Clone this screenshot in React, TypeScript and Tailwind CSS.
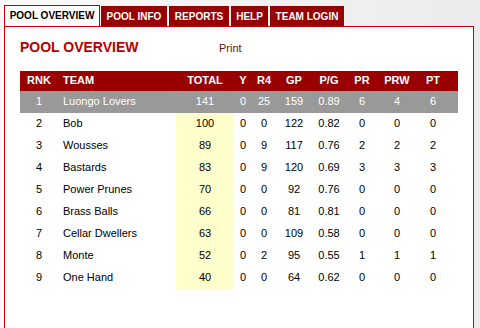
import React from "react";

const rows = [
  ["1", "Luongo Lovers", "141", "0", "25", "159", "0.89", "6", "4", "6"],
  ["2", "Bob", "100", "0", "0", "122", "0.82", "0", "0", "0"],
  ["3", "Wousses", "89", "0", "9", "117", "0.76", "2", "2", "2"],
  ["4", "Bastards", "83", "0", "9", "120", "0.69", "3", "3", "3"],
  ["5", "Power Prunes", "70", "0", "0", "92", "0.76", "0", "0", "0"],
  ["6", "Brass Balls", "66", "0", "0", "81", "0.81", "0", "0", "0"],
  ["7", "Cellar Dwellers", "63", "0", "0", "109", "0.58", "0", "0", "0"],
  ["8", "Monte", "52", "0", "2", "95", "0.55", "1", "1", "1"],
  ["9", "One Hand", "40", "0", "0", "64", "0.62", "0", "0", "0"],
];

const headers = ["RNK", "TEAM", "TOTAL", "Y", "R4", "GP", "P/G", "PR", "PRW", "PT"];
const widths = ["w-[38px]", "w-[118px]", "w-[58px]", "w-[18px]", "w-[24px]", "w-[36px]", "w-[34px]", "w-[32px]", "w-[38px]", "w-[34px]"];

function Cell({ i, children, extra = "" }: { i: number; children: React.ReactNode; extra?: string }) {
  const align = i === 1 ? "text-left pl-[5px]" : "text-center";
  return <div className={`${widths[i]} ${align} shrink-0 ${extra}`}>{children}</div>;
}

export default function App() {
  return (
    <div
      className="w-[480px] h-[328px] overflow-hidden pt-[6px] pl-[4px] bg-gradient-to-r from-[#fbfbfb] to-[#ebebeb]"
      style={{ fontFamily: '"Liberation Sans", Arial, sans-serif' }}
    >
      <div className="flex items-end relative z-10 h-[20px]">
        <div className="w-[96px] h-[21px] bg-white border border-b-0 border-[#c00000] text-black text-[10px] font-bold leading-[19px] text-center">
          POOL OVERVIEW
        </div>
        <div className="ml-[1px] w-[66px] h-[20px] bg-[#990000] text-white text-[10px] font-bold leading-[21px] text-center">POOL INFO</div>
        <div className="ml-[2px] w-[60px] h-[20px] bg-[#990000] text-white text-[10px] font-bold leading-[21px] text-center">REPORTS</div>
        <div className="ml-[2px] w-[37px] h-[20px] bg-[#990000] text-white text-[10px] font-bold leading-[21px] text-center">HELP</div>
        <div className="ml-[2px] w-[74px] h-[20px] bg-[#990000] text-white text-[10px] font-bold leading-[21px] text-center">TEAM LOGIN</div>
      </div>
      <div className="w-[470px] h-[320px] bg-white border border-[#c00000] pl-[15px]">
        <div className="flex items-baseline mt-[12px]">
          <div className="w-[199px] text-[14px] leading-[16px] font-bold text-[#b80000]">POOL OVERVIEW</div>
          <div className="text-[11px] text-[#6b1010]">Print</div>
        </div>
        <div className="mt-[14px] w-[438px] text-[11px]">
          <div className="flex h-[20px] items-center bg-[#990000] text-white font-bold">
            {headers.map((h, i) => (
              <Cell key={h} i={i}>{h}</Cell>
            ))}
          </div>
          {rows.map((r, ri) => (
            <div
              key={ri}
              className={`flex h-[22px] items-stretch ${ri === 0 ? "bg-[#999999] text-white" : "text-black"}`}
            >
              {r.map((v, i) => (
                <Cell
                  key={i}
                  i={i}
                  extra={`flex items-center ${i === 1 ? "justify-start" : "justify-center"} ${i === 2 && ri > 0 ? "bg-[#ffffcc]" : ""}`}
                >
                  {v}
                </Cell>
              ))}
            </div>
          ))}
        </div>
      </div>
    </div>
  );
}
